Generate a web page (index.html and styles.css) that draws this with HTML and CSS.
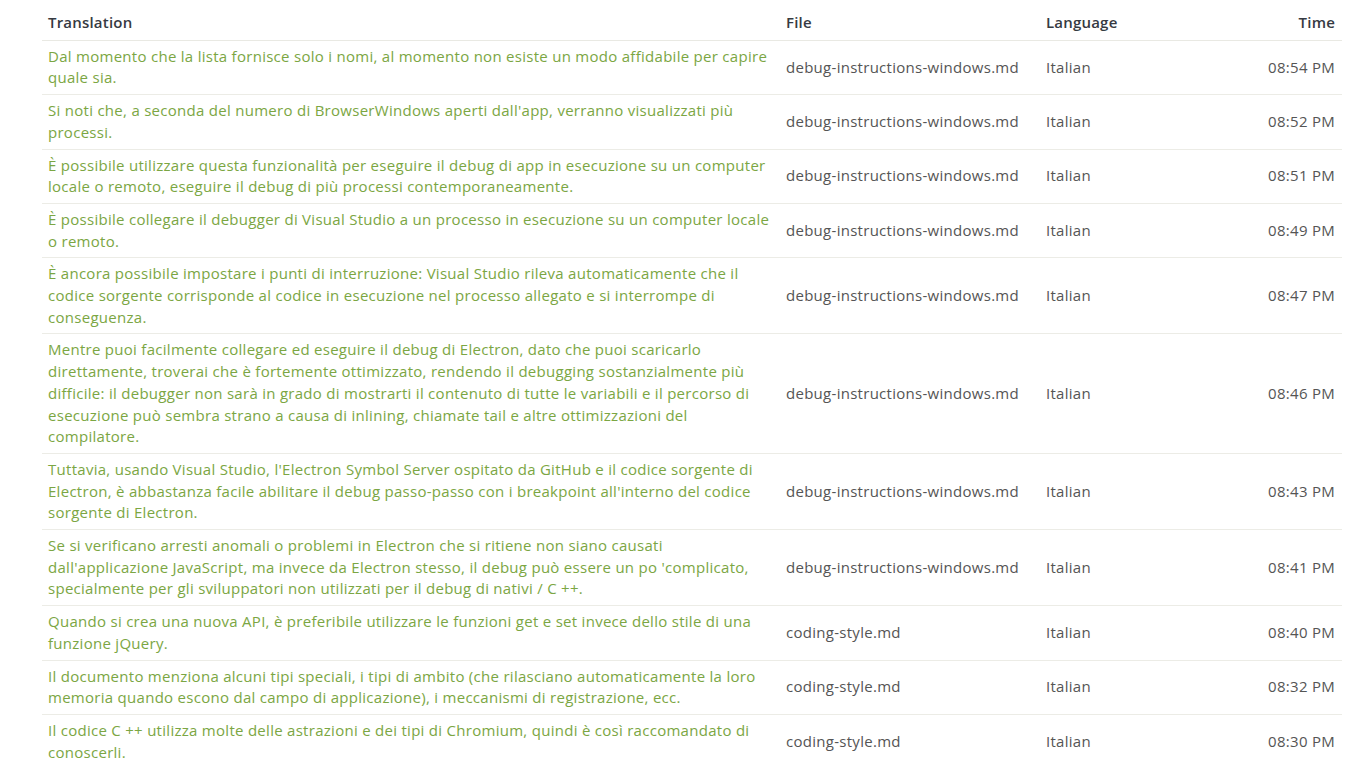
FILE: index.html
```html
<!DOCTYPE html>
<html lang="it">
<head>
<meta charset="utf-8">
<title>Translations</title>
<link rel="stylesheet" href="styles.css">
</head>
<body>
<div class="wrap">
<table class="log">
  <colgroup>
    <col class="c-tr">
    <col class="c-file">
    <col class="c-lang">
    <col class="c-time">
  </colgroup>
  <thead>
    <tr><th>Translation</th><th>File</th><th>Language</th><th class="right">Time</th></tr>
  </thead>
  <tbody>
    <tr><td class="tr">Dal momento che la lista fornisce solo i nomi, al momento non esiste un modo affidabile per capire quale sia.</td><td>debug-instructions-windows.md</td><td>Italian</td><td class="right">08:54 PM</td></tr>
    <tr><td class="tr">Si noti che, a seconda del numero di BrowserWindows aperti dall'app, verranno visualizzati più processi.</td><td>debug-instructions-windows.md</td><td>Italian</td><td class="right">08:52 PM</td></tr>
    <tr><td class="tr">È possibile utilizzare questa funzionalità per eseguire il debug di app in esecuzione su un computer locale o remoto, eseguire il debug di più processi contemporaneamente.</td><td>debug-instructions-windows.md</td><td>Italian</td><td class="right">08:51 PM</td></tr>
    <tr><td class="tr">È possibile collegare il debugger di Visual Studio a un processo in esecuzione su un computer locale o remoto.</td><td>debug-instructions-windows.md</td><td>Italian</td><td class="right">08:49 PM</td></tr>
    <tr><td class="tr">È ancora possibile impostare i punti di interruzione: Visual Studio rileva automaticamente che il codice sorgente corrisponde al codice in esecuzione nel processo allegato e si interrompe di conseguenza.</td><td>debug-instructions-windows.md</td><td>Italian</td><td class="right">08:47 PM</td></tr>
    <tr><td class="tr">Mentre puoi facilmente collegare ed eseguire il debug di Electron, dato che puoi scaricarlo direttamente, troverai che è fortemente ottimizzato, rendendo il debugging sostanzialmente più difficile: il debugger non sarà in grado di mostrarti il contenuto di tutte le variabili e il percorso di esecuzione può sembra strano a causa di inlining, chiamate tail e altre ottimizzazioni del compilatore.</td><td>debug-instructions-windows.md</td><td>Italian</td><td class="right">08:46 PM</td></tr>
    <tr><td class="tr">Tuttavia, usando Visual Studio, l'Electron Symbol Server ospitato da GitHub e il codice sorgente di Electron, è abbastanza facile abilitare il debug passo-passo con i breakpoint all'interno del codice sorgente di Electron.</td><td>debug-instructions-windows.md</td><td>Italian</td><td class="right">08:43 PM</td></tr>
    <tr><td class="tr">Se si verificano arresti anomali o problemi in Electron che si ritiene non siano causati dall'applicazione JavaScript, ma invece da Electron stesso, il debug può essere un po 'complicato, specialmente per gli sviluppatori non utilizzati per il debug di nativi / C ++.</td><td>debug-instructions-windows.md</td><td>Italian</td><td class="right">08:41 PM</td></tr>
    <tr><td class="tr">Quando si crea una nuova API, è preferibile utilizzare le funzioni get e set invece dello stile di una funzione jQuery.</td><td>coding-style.md</td><td>Italian</td><td class="right">08:40 PM</td></tr>
    <tr><td class="tr">Il documento menziona alcuni tipi speciali, i tipi di ambito (che rilasciano automaticamente la loro memoria quando escono dal campo di applicazione), i meccanismi di registrazione, ecc.</td><td>coding-style.md</td><td>Italian</td><td class="right">08:32 PM</td></tr>
    <tr><td class="tr">Il codice C ++ utilizza molte delle astrazioni e dei tipi di Chromium, quindi è così raccomandato di conoscerli.</td><td>coding-style.md</td><td>Italian</td><td class="right">08:30 PM</td></tr>
  </tbody>
</table>
</div>
</body>
</html>
```

FILE: styles.css
```css
html, body {
  margin: 0;
  padding: 0;
  background: #ffffff;
}

body {
  font-family: "Open Sans", "Noto Sans", "Liberation Sans", sans-serif;
  font-size: 15px;
  letter-spacing: 0.28px;
  line-height: 21.7px;
  color: #555555;
}

.wrap {
  padding: 0 24px 0 42px;
}

.log {
  width: 1300px;
  border-collapse: collapse;
  table-layout: fixed;
}

.c-tr { width: 738px; }
.c-file { width: 260px; }
.c-lang { width: 160px; }
.c-time { width: 142px; }

.log th {
  text-align: left;
  font-weight: 600;
  letter-spacing: 0.2px;
  color: #363a42;
  padding: 12px 6px 6px;
  border-bottom: 1px solid #e9e9e3;
}

.log td {
  padding: 5px 6px;
  vertical-align: middle;
  border-bottom: 1px solid #ececE6;
}

.log td.tr {
  color: #7ba643;
  padding-right: 4px;
}

.log .right {
  text-align: right;
  padding-right: 7px;
}
```
